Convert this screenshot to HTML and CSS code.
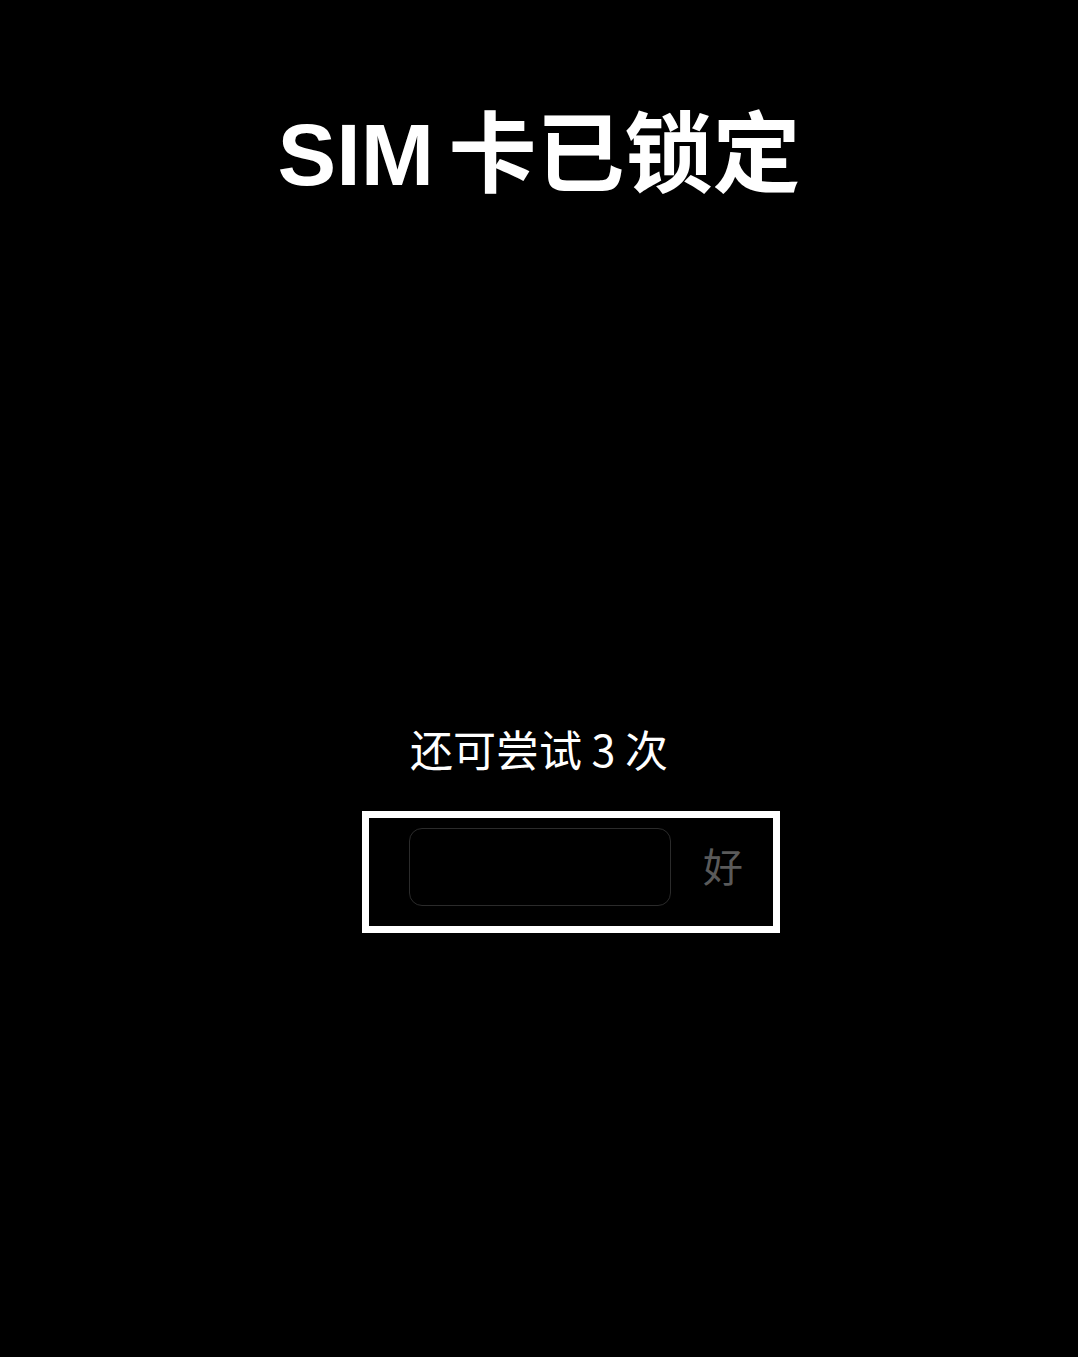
FILE: index.html
```html
<!DOCTYPE html>
<html lang="zh-CN">
<head>
<meta charset="utf-8">
<title>SIM 卡已锁定</title>
<link rel="stylesheet" href="styles.css">
</head>
<body>
<main class="screen">
  <h1 class="title">SIM 卡已锁定</h1>
  <p class="attempts">还可尝试 3 次</p>
  <div class="entry">
    <div class="pin-field"></div>
    <span class="ok">好</span>
  </div>
</main>
</body>
</html>
```
FILE: styles.css
```css
html, body {
  margin: 0;
  padding: 0;
  background: #000;
}
.screen {
  width: 1078px;
  height: 1357px;
  display: flex;
  flex-direction: column;
  align-items: center;
  font-family: "Liberation Sans", "Noto Sans CJK SC", sans-serif;
  color: #fff;
}
.title {
  margin: 0;
  padding-top: 112px;
  font-size: 88px;
  font-weight: 700;
  line-height: 86px;
  word-spacing: -10px;
}
.attempts {
  margin: 528px 0 0 0;
  font-family: "Noto Sans CJK SC", sans-serif;
  font-size: 43px;
  font-weight: 400;
  line-height: 44px;
}
.entry {
  align-self: flex-start;
  margin-left: 362px;
  margin-top: 41px;
  width: 418px;
  height: 122px;
  box-sizing: border-box;
  border: 7px solid #fff;
  display: flex;
  align-items: flex-start;
  padding: 10px 0 0 40px;
}
.pin-field {
  width: 262px;
  height: 78px;
  box-sizing: border-box;
  border: 1.5px solid #2b2b2b;
  border-radius: 13px;
  background: #000;
}
.ok {
  margin: 17px 0 0 32px;
  font-family: "Noto Sans CJK SC", sans-serif;
  font-size: 40px;
  line-height: 40px;
  color: #5a5a5a;
}
```
